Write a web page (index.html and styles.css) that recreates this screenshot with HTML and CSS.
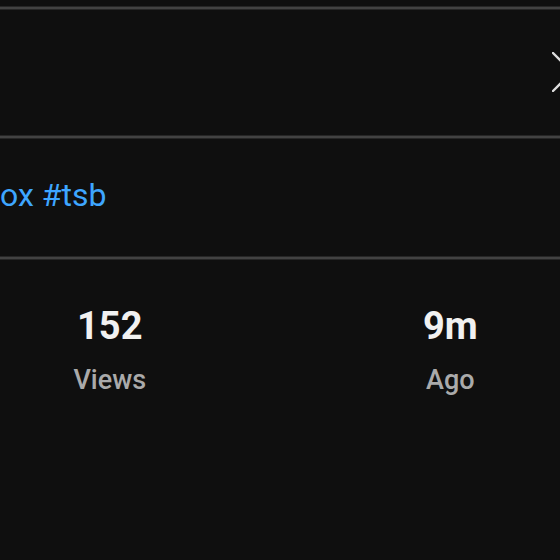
FILE: index.html
```html
<!DOCTYPE html>
<html lang="en">
<head>
<meta charset="utf-8">
<title>Description</title>
<link rel="stylesheet" href="styles.css">
</head>
<body>
<div class="panel">
  <div class="top-gap"></div>
  <div class="divider"></div>
  <div class="header">
    <button class="close" aria-label="Close">
      <svg width="40" height="40" viewBox="0 0 40 40"><path d="M1 1 L39 39 M1 39 L39 1" stroke="#dddddd" stroke-width="2.4" stroke-linecap="round" fill="none"/></svg>
    </button>
  </div>
  <div class="divider"></div>
  <div class="desc">
    <a class="tags" href="#">ox #tsb</a>
  </div>
  <div class="divider"></div>
  <div class="stats">
    <div class="stat">
      <div class="num">152</div>
      <div class="label">Views</div>
    </div>
    <div class="stat">
      <div class="num">9m</div>
      <div class="label">Ago</div>
    </div>
  </div>
</div>
</body>
</html>
```

FILE: styles.css
```css
html, body {
  margin: 0;
  padding: 0;
  background: #0f0f0f;
  overflow: hidden;
}
body {
  width: 560px;
  height: 560px;
  font-family: Roboto, "Liberation Sans", sans-serif;
}
.panel {
  display: flex;
  flex-direction: column;
  width: 560px;
  overflow: hidden;
}
.top-gap {
  height: 7px;
}
.divider {
  height: 2px;
  background: #424242;
  box-shadow: 0 1px 0 #262626, 0 -1px 0 #262626;
}
.header {
  height: 127px;
  display: flex;
  justify-content: flex-end;
  align-items: flex-start;
  padding-top: 43px;
  box-sizing: border-box;
}
.close {
  background: none;
  border: 0;
  padding: 0;
  margin-right: -32px;
  width: 40px;
  height: 40px;
  display: block;
}
.close svg {
  display: block;
}
.desc {
  height: 119px;
  box-sizing: border-box;
  padding-top: 38px;
}
.tags {
  color: #3ea6ff;
  text-decoration: none;
  font-size: 32px;
  line-height: 38px;
  display: block;
}
.stats {
  display: flex;
  gap: 121px;
  padding-top: 45px;
}
.stat {
  width: 220px;
  display: flex;
  flex-direction: column;
  align-items: center;
  gap: 16px;
}
.num {
  color: #f1f1f1;
  font-weight: 700;
  font-size: 38px;
  line-height: 44px;
}
.label {
  color: #aaaaaa;
  font-weight: 500;
  font-size: 27px;
  line-height: 32px;
}
```
